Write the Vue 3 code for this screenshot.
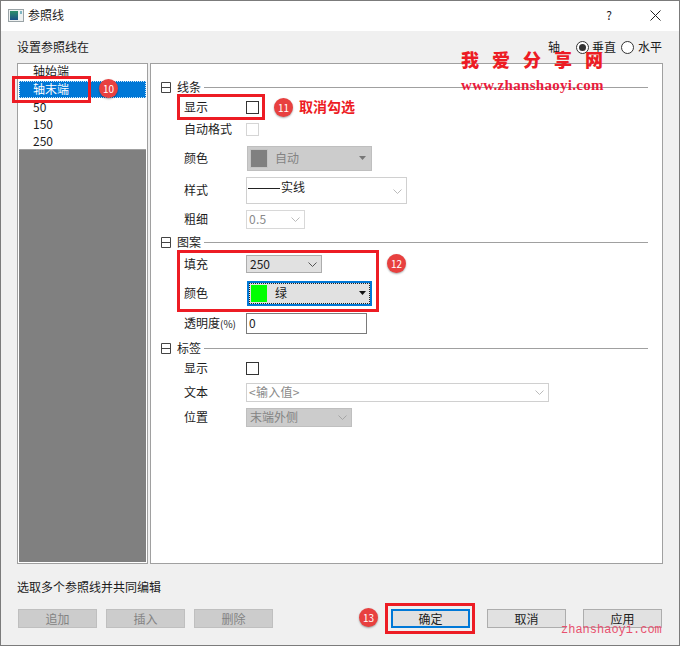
<script setup>
const disabledButtons = ['追加', '插入', '删除']
const listRows = ['50', '150', '250']
</script>

<template>
  <div class="window">
    <header class="titlebar">
      <svg class="app-icon" width="16" height="13" viewBox="0 0 16 13">
        <defs>
          <linearGradient id="ic" x1="0" y1="0" x2="0" y2="1">
            <stop offset="0" stop-color="#2f8f6a" />
            <stop offset="1" stop-color="#1c4f86" />
          </linearGradient>
        </defs>
        <rect x="0.5" y="0.5" width="15" height="12" fill="#eef1f1" stroke="#9aa3a6" />
        <rect x="2" y="2" width="8" height="9" fill="url(#ic)" />
        <rect x="12" y="2" width="2" height="3" fill="#7fb6c4" />
      </svg>
      <span class="title">参照线</span>
      <span class="help">?</span>
      <svg class="close" width="11" height="11" viewBox="0 0 11 11">
        <path d="M0.5 0.5L10.5 10.5M10.5 0.5L0.5 10.5" stroke="#222" stroke-width="1" fill="none" />
      </svg>
    </header>

    <div class="content">
      <div class="toprow">
        <span>设置参照线在</span>
        <div class="axis">
          <span class="axis-label">轴</span>
          <span class="radio on"></span>
          <span>垂直</span>
          <span class="radio second"></span>
          <span>水平</span>
        </div>
      </div>

      <div class="main">
        <div class="list">
          <div class="item first">轴始端</div>
          <div class="item selected">轴末端</div>
          <div v-for="r in listRows" :key="r" class="item">{{ r }}</div>
          <div class="list-fill"></div>
        </div>

        <div class="panel">
          <div class="section h18">
            <svg class="toggle" width="11" height="11" viewBox="0 0 11 11"><path d="M0.5 0.5H9.5V10.5H0.5ZM0.5 5.5H9.5" fill="none" stroke="#444" /></svg>
            <span class="section-name">线条</span><i class="rule"></i>
          </div>
          <div class="row h22"><label>显示</label><span class="check"></span></div>
          <div class="row h22"><label>自动格式</label><span class="check off"></span></div>
          <div class="row h36">
            <label>颜色</label>
            <div class="ctl color disabled">
              <span class="swatch grey"></span><span class="ctl-text">自动</span>
              <svg class="tri" width="7" height="4" viewBox="0 0 7 4"><path d="M0 0H7L3.5 4Z" fill="#777" /></svg>
            </div>
          </div>
          <div class="row h28">
            <label>样式</label>
            <div class="ctl style">
              <i class="solid"></i><span class="solid-text">实线</span>
              <svg class="chev" width="9" height="5" viewBox="0 0 9 5"><path d="M0.5 0.5L4.5 4.5L8.5 0.5" fill="none" stroke="#bbb" /></svg>
            </div>
          </div>
          <div class="row h30">
            <label>粗细</label>
            <div class="ctl thick">
              <span class="grey-text">0.5</span>
              <svg class="chev" width="9" height="5" viewBox="0 0 9 5"><path d="M0.5 0.5L4.5 4.5L8.5 0.5" fill="none" stroke="#bbb" /></svg>
            </div>
          </div>

          <div class="section h16">
            <svg class="toggle" width="11" height="11" viewBox="0 0 11 11"><path d="M0.5 0.5H9.5V10.5H0.5ZM0.5 5.5H9.5" fill="none" stroke="#444" /></svg>
            <span class="section-name">图案</span><i class="rule"></i>
          </div>
          <div class="row h28">
            <label>填充</label>
            <div class="ctl fill">
              <span>250</span>
              <svg class="chev" width="9" height="5" viewBox="0 0 9 5"><path d="M0.5 0.5L4.5 4.5L8.5 0.5" fill="none" stroke="#555" /></svg>
            </div>
          </div>
          <div class="row h30">
            <label>颜色</label>
            <div class="ctl color focused">
              <span class="swatch green"></span><span class="ctl-text">绿</span>
              <svg class="tri" width="7" height="4" viewBox="0 0 7 4"><path d="M0 0H7L3.5 4Z" fill="#111" /></svg>
            </div>
          </div>
          <div class="row h30">
            <label>透明度<small>(%)</small></label>
            <div class="ctl input"><span>0</span></div>
          </div>

          <div class="section h20">
            <svg class="toggle" width="11" height="11" viewBox="0 0 11 11"><path d="M0.5 0.5H9.5V10.5H0.5ZM0.5 5.5H9.5" fill="none" stroke="#444" /></svg>
            <span class="section-name">标签</span><i class="rule"></i>
          </div>
          <div class="row h20"><label>显示</label><span class="check"></span></div>
          <div class="row h28">
            <label>文本</label>
            <div class="ctl text">
              <span class="grey-text">&lt;输入值&gt;</span>
              <svg class="chev" width="9" height="5" viewBox="0 0 9 5"><path d="M0.5 0.5L4.5 4.5L8.5 0.5" fill="none" stroke="#bbb" /></svg>
            </div>
          </div>
          <div class="row h22">
            <label>位置</label>
            <div class="ctl pos">
              <span class="pos-text">末端外侧</span>
              <svg class="chev" width="9" height="5" viewBox="0 0 9 5"><path d="M0.5 0.5L4.5 4.5L8.5 0.5" fill="none" stroke="#a5a5a5" /></svg>
            </div>
          </div>
        </div>
      </div>

      <div class="note">选取多个参照线并共同编辑</div>

      <div class="buttons">
        <button v-for="b in disabledButtons" :key="b" class="btn dim">{{ b }}</button>
        <button class="btn primary">确定</button>
        <button class="btn">取消</button>
        <button class="btn">应用</button>
      </div>
    </div>

    <!-- tutorial annotations laid over the dialog -->
    <i class="mark m-list"></i>
    <i class="mark m-show"></i>
    <i class="mark m-fill"></i>
    <i class="mark m-ok"></i>
    <span class="badge b10">10</span>
    <span class="badge b11">11</span>
    <span class="badge b12">12</span>
    <span class="badge b13">13</span>
    <span class="callout">取消勾选</span>
    <span class="wm-cn">我爱分享网</span>
    <span class="wm-url">www.zhanshaoyi.com</span>
    <span class="wm-foot">zhanshaoyi.com</span>
  </div>
</template>

<style scoped>
.window {
  position: relative;
  box-sizing: border-box;
  width: 680px;
  height: 646px;
  border: 1px solid #7b7b7b;
  background: #f0f0f0;
  display: flex;
  flex-direction: column;
  font-family: "Noto Sans CJK SC", "Liberation Sans", sans-serif;
  font-size: 12px;
  line-height: 16px;
  color: #1c1c1c;
  overflow: hidden;
}

.titlebar {
  box-sizing: border-box;
  height: 30px;
  flex: none;
  background: #fff;
  display: flex;
  align-items: center;
  padding: 0 0 2px 7px;
}
.app-icon { margin-right: 4px; }
.title { flex: 1; }
.help { width: 10px; margin-right: 36px; text-align: center; }
.close { margin-right: 18px; }

.content { flex: 1; display: flex; flex-direction: column; padding: 0 16px; }

.toprow {
  height: 32px;
  flex: none;
  display: flex;
  justify-content: space-between;
  align-items: center;
}
.axis { display: flex; align-items: center; margin-right: 1px; }
.axis-label { margin-right: 16px; }
.radio {
  box-sizing: border-box;
  width: 13px;
  height: 13px;
  border: 1px solid #333;
  border-radius: 50%;
  background: #fff;
  margin-right: 3px;
  display: flex;
  align-items: center;
  justify-content: center;
}
.radio.on::after {
  content: "";
  width: 7px;
  height: 7px;
  border-radius: 50%;
  background: #333;
}
.radio.second { margin-left: 5px; margin-right: 4px; }

.main { height: 501px; flex: none; display: flex; gap: 2px; }

.list {
  box-sizing: border-box;
  width: 131px;
  border: 1px solid #a0a0a0;
  background: #fff;
  padding: 0 1px 1px;
  display: flex;
  flex-direction: column;
}
.item { height: 17px; flex: none; padding-left: 14px; line-height: 17px; }
.item.first { line-height: 13px; }
.item.selected {
  background: #0078d7;
  color: #fff;
  line-height: 16px;
  outline: 1px dotted #cfe6f8;
  outline-offset: -1px;
}
.list-fill { flex: 1; background: #808080; border-top: 1px solid #a0a0a0; }

.panel {
  box-sizing: border-box;
  width: 513px;
  border: 1px solid #a0a0a0;
  background: #fff;
  padding: 14px 14px 0 10px;
  display: flex;
  flex-direction: column;
}

.section { display: flex; align-items: center; flex: none; }
.toggle { margin-right: 5px; }
.section-name { margin-right: 3px; }
.rule { flex: 1; height: 1px; background: #a0a0a0; }

.row { display: flex; align-items: center; flex: none; padding-left: 23px; }
.row label { width: 62px; flex: none; }
.row label small { font-size: 10px; }

.h16 { height: 16px; }
.h18 { height: 18px; }
.h20 { height: 20px; }
.h22 { height: 22px; }
.h28 { height: 28px; }
.h30 { height: 30px; }
.h36 { height: 36px; }

.check {
  box-sizing: border-box;
  width: 13px;
  height: 13px;
  border: 1px solid #333;
  background: #fff;
}
.check.off { border-color: #d5d5d5; }

.ctl {
  box-sizing: border-box;
  display: flex;
  align-items: center;
  position: relative;
  flex: none;
}
.chev, .tri { position: absolute; }

.color { width: 125px; margin-left: 1px; height: 25px; }
.color.disabled { background: #ccc; border: 1px solid #bfbfbf; color: #838383; }
.color.focused { background: #e1e1e1; border: 2px solid #0078d7; outline: 1px dotted #222; outline-offset: -3px; }
.swatch { width: 18px; height: 19px; margin-left: 2px; border: 1px solid #c4c4c4; box-sizing: border-box; }
.swatch.grey { background: #808080; }
.swatch.green { background: #00ff00; border-color: #e1e1e1; margin-left: 1px; }
.ctl-text { margin-left: 7px; }
.color .tri { right: 5px; top: 9px; }
.color.focused .tri { right: 4px; top: 8px; }

.style { width: 161px; height: 27px; border: 1px solid #d0d0d0; background: #fff; }
.solid { width: 32px; height: 1px; background: #222; margin: -4px 0 0 1px; }
.solid-text { margin: -7px 0 0 1px; }
.style .chev { right: 4px; top: 11px; }

.thick { width: 59px; height: 19px; border: 1px solid #d8d8d8; background: #fff; padding-left: 2px; }
.thick .chev { right: 4px; top: 6px; }
.grey-text { color: #8a8a8a; letter-spacing: 0.3px; }

.fill { width: 76px; height: 18px; border: 1px solid #adadad; background: #e1e1e1; padding-left: 3px; }
.fill .chev { right: 4px; top: 6px; }

.input { width: 121px; height: 21px; border: 1px solid #7a7a7a; background: #fff; padding-left: 2px; }

.text { width: 303px; height: 19px; border: 1px solid #d0d0d0; background: #fff; padding-left: 2px; }
.text .chev { right: 4px; top: 6px; }

.pos { width: 106px; height: 19px; background: #ccc; border: 1px solid #bfbfbf; padding-left: 3px; }
.pos-text { color: #838383; }
.pos .chev { right: 4px; top: 6px; }

.note { height: 45px; flex: none; display: flex; align-items: center; }

.buttons { display: flex; gap: 9px; padding-left: 1px; }
.btn {
  box-sizing: border-box;
  width: 79px;
  height: 19px;
  padding: 0;
  border: 1px solid #adadad;
  background: #e1e1e1;
  color: #1c1c1c;
  font: inherit;
  line-height: 15px;
}
.btn.dim { background: #ccc; border-color: #bfbfbf; color: #838383; }
.btn.primary { border: 2px solid #0078d7; margin-left: 109px; margin-right: 8px; }
.btn.primary + .btn { margin-right: 8px; }

.mark { position: absolute; box-sizing: border-box; border: 3px solid #ed1c24; pointer-events: none; }
.m-list { left: 11px; top: 75px; width: 79px; height: 27px; }
.m-show { left: 176px; top: 93px; width: 88px; height: 26px; }
.m-fill { left: 176px; top: 249px; width: 202px; height: 62px; }
.m-ok { left: 384px; top: 602px; width: 90px; height: 31px; }

.badge {
  position: absolute;
  width: 19px;
  height: 19px;
  border-radius: 50%;
  background: #e8403f;
  box-shadow: 0 1px 2px rgba(0, 0, 0, 0.35);
  color: #fff;
  font-size: 10px;
  line-height: 19px;
  text-align: center;
}
.b10 { left: 98px; top: 78px; }
.b11 { left: 273px; top: 97px; }
.b12 { left: 386px; top: 253px; }
.b13 { left: 358px; top: 607px; }

.callout {
  position: absolute;
  left: 298px;
  top: 95px;
  color: #ed1c24;
  font-size: 14px;
  line-height: 20px;
  font-weight: 700;
}
.wm-cn {
  position: absolute;
  left: 460px;
  top: 45px;
  font-size: 18px;
  line-height: 26px;
  font-weight: 900;
  letter-spacing: 13px;
  color: #ed1c24;
  white-space: nowrap;
}
.wm-url {
  position: absolute;
  left: 460px;
  top: 76px;
  font-family: "Liberation Serif", serif;
  font-size: 15px;
  line-height: 16px;
  font-weight: 700;
  letter-spacing: 0.3px;
  color: #ea1c3c;
  white-space: nowrap;
}
.wm-foot {
  position: absolute;
  left: 560px;
  top: 622px;
  font-family: "Liberation Mono", monospace;
  font-size: 12px;
  line-height: 14px;
  color: #e8506e;
  white-space: nowrap;
}
</style>
